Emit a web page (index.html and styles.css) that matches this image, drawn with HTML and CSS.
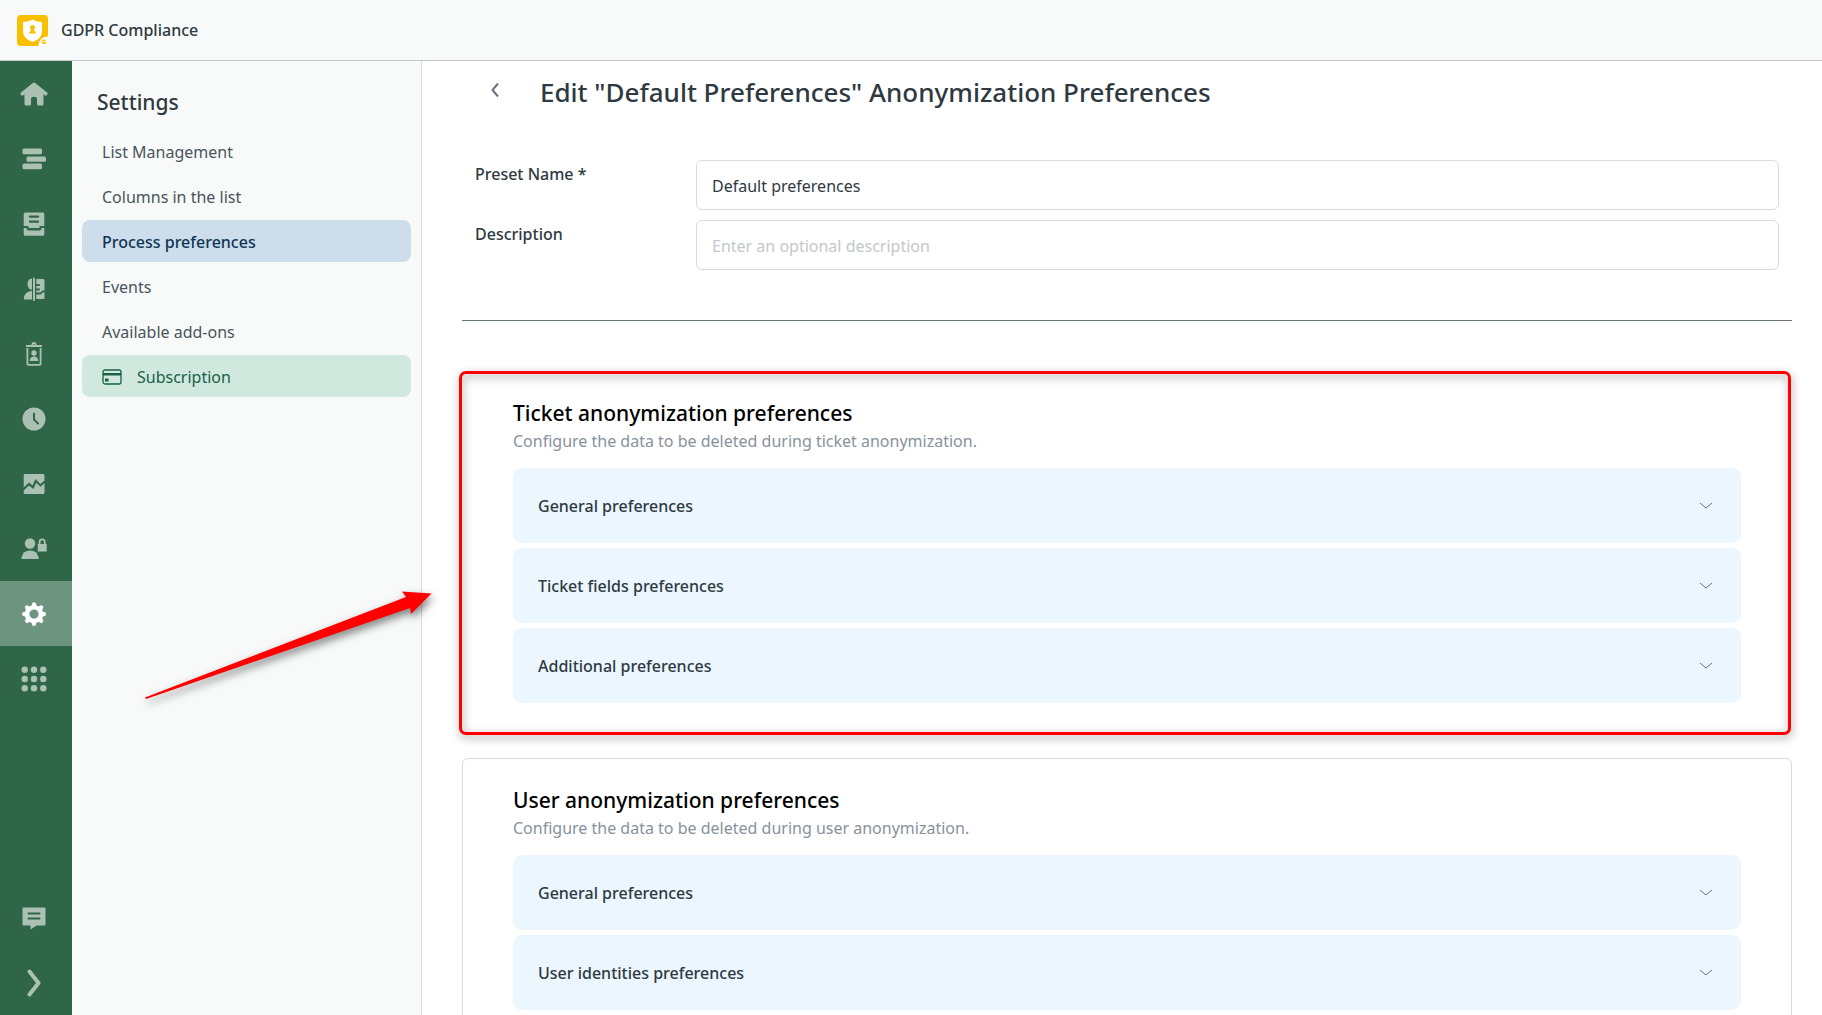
FILE: index.html
```html
<!DOCTYPE html>
<html lang="en">
<head>
<meta charset="utf-8">
<meta name="viewport" content="width=device-width, initial-scale=1">
<title>GDPR Compliance</title>
<link rel="stylesheet" href="styles.css">
</head>
<body>
<div class="app">
  <header class="topbar">
    <svg class="logo" viewBox="0 0 31 31" aria-hidden="true">
      <path fill="#f9c000" d="M4 0H27Q31 0 31 4V22A9 9 0 0 0 21.500 31H4Q0 31 0 27V4Q0 0 4 0Z"/>
      <path fill="#fff" d="M15.500 4.500Q20 7 25 7V16Q25 23.500 15.500 27Q6 23.500 6 16V7Q11 7 15.500 4.500Z"/>
      <path fill="#f9c000" d="M15.500 10A2.600 2.600 0 0 1 17 14.700L17.500 16.200Q19 16.500 19 18.500H12Q12 16.500 13.500 16.200L14 14.700A2.600 2.600 0 0 1 15.500 10Z"/>
      <path fill="#fff" d="M31 21.500A9 9 0 0 0 21.500 31H31Z"/>
      <path fill="none" stroke="#f9c000" stroke-width="1.300" d="M28.300 25.800A1.700 1.700 0 1 0 28.500 27.400H27"/>
    </svg>
    <span class="brand">GDPR Compliance</span>
  </header>

  <div class="body">
    <nav class="rail" aria-label="Main">
      <a class="rail-item" href="#" aria-label="Home"><svg viewBox="0 0 28 28"><path d="M14 2.500Q14.600 2.500 15.200 3L27.300 12.800Q28 13.500 27.400 14.300L26.600 15.300Q26 16 25.200 15.400L23.500 14.200V24Q23.500 25.500 22 25.500H18.500Q17 25.500 17 24V19Q17 16.800 14 16.800T11 19V24Q11 25.500 9.500 25.500H6Q4.500 25.500 4.500 24V14.200L2.800 15.400Q2 16 1.400 15.300L.6 14.300Q0 13.500.7 12.800L12.800 3Q13.400 2.500 14 2.500Z"/></svg></a>
      <a class="rail-item" href="#" aria-label="Views"><svg viewBox="0 0 28 28"><rect x="2.500" y="3.500" width="19.500" height="5.800" rx="1.500"/><rect x="6.500" y="11.500" width="19.500" height="5.300" rx="1.500"/><rect x="2.500" y="18.500" width="19.500" height="5.800" rx="1.500"/></svg></a>
      <a class="rail-item" href="#" aria-label="Tickets"><svg viewBox="0 0 28 28"><path fill-rule="evenodd" d="M5 2.500H23Q24.300 2.500 24.300 4V16H20.500Q19.300 16 19.300 18H8.700Q8.700 16 7.500 16H3.700V4Q3.700 2.500 5 2.500ZM10 5.500a1 1 0 0 0 0 2.300h8a1 1 0 0 0 0-2.300ZM10 10.500a1 1 0 0 0 0 2.300h8a1 1 0 0 0 0-2.300Z"/><path d="M3.700 18H6.500Q6.500 20.500 8.500 20.500H19.500Q21.500 20.500 21.500 18H24.300V24Q24.300 25.800 23 25.800H5Q3.700 25.800 3.700 24Z"/></svg></a>
      <a class="rail-item" href="#" aria-label="Users and tickets"><svg viewBox="0 0 28 28"><path d="M12 3.500V14.800Q7.500 14 7.500 9T12 3.500ZM12 15.800V24.500H3.700Q3.700 17 12 15.800Z"/><rect x="13" y="2.500" width="2" height="23.500" rx="1"/><path d="M16.300 4H23Q24.500 4 24.500 5.500V15.500H22Q21.500 17.500 20 17.500H16.300V15.500H19Q20 15.500 20 14.500T19 13.500H16.300V11H19Q20 11 20 10T19 9H16.300ZM16.300 19.500H20Q21.800 19.500 22.300 17.500H24.500V22.500Q24.500 24 23 24H16.300Z"/></svg></a>
      <a class="rail-item" href="#" aria-label="Anonymization"><svg viewBox="0 0 28 28"><path fill-rule="evenodd" d="M11.500 5V4Q11.500 2 14 2T16.500 4V5H22V7H6V5ZM13.200 5H14.800V4.200H13.200ZM6.500 8H21.500V24Q21.500 25.800 20 25.800H8Q6.500 25.800 6.500 24ZM8.300 8V24H19.700V8Z"/><circle cx="14" cy="13" r="2.700"/><path d="M9.700 21Q10 16.500 14 16.500T18.300 21Z"/></svg></a>
      <a class="rail-item" href="#" aria-label="History"><svg viewBox="0 0 28 28"><circle cx="14" cy="14" r="11.500"/><path class="cut" d="M14 8.500V14.500L18 18.500"/></svg></a>
      <a class="rail-item" href="#" aria-label="Reports"><svg viewBox="0 0 28 28"><path d="M5 4H23Q24.500 4 24.500 5.500V10.500L20.500 14L15.500 9L12.500 15.500L9 12.500L3.700 17.500V5.500Q3.700 4 5 4Z"/><path d="M24.500 13V22.500Q24.500 24 23 24H5Q3.700 24 3.700 22.500V20.500L9 15.500L13.300 19L16.300 12.700L20.500 16.800Z"/></svg></a>
      <a class="rail-item" href="#" aria-label="Roles"><svg viewBox="0 0 28 28"><circle cx="10" cy="8.500" r="5.200"/><path d="M1.500 24V22.500Q3 15.500 10 15.500T18.700 22.500V24Z"/><path fill-rule="evenodd" d="M18.700 9V7Q18.700 3.500 22.200 3.500T25.700 7V9H26.700V16.500H17.800V9ZM20.500 9H23.900V7Q23.900 5.300 22.200 5.300T20.500 7Z"/></svg></a>
      <a class="rail-item is-active" href="#" aria-label="Settings" aria-current="page"><svg viewBox="0 0 28 28"><path fill-rule="evenodd" d="M12.500 2.500H15.500L16.500 5.500L18.600 6.400L21.500 5L23.500 7L22.200 9.800L23 11.800L25.800 12.500V15.500L23 16.500L22.200 18.500L23.500 21.200L21.500 23.200L18.600 22L16.500 22.800L15.500 25.700H12.500L11.500 22.800L9.500 22L6.700 23.200L4.700 21.200L5.900 18.500L5 16.500L2.300 15.500V12.500L5 11.800L5.900 9.800L4.700 7L6.700 5L9.500 6.400L11.500 5.500ZM14 9.500A4.600 4.600 0 1 0 14 18.700A4.600 4.600 0 1 0 14 9.500Z"/></svg></a>
      <a class="rail-item" href="#" aria-label="Apps"><svg viewBox="0 0 28 28"><circle cx="4.700" cy="4.700" r="3.200"/><circle cx="14" cy="4.700" r="3.200"/><circle cx="23.300" cy="4.700" r="3.200"/><circle cx="4.700" cy="14" r="3.200"/><circle cx="14" cy="14" r="3.200"/><circle cx="23.300" cy="14" r="3.200"/><circle cx="4.700" cy="23.300" r="3.200"/><circle cx="14" cy="23.300" r="3.200"/><circle cx="23.300" cy="23.300" r="3.200"/></svg></a>
      <div class="rail-spacer"></div>
      <a class="rail-item" href="#" aria-label="Feedback"><svg viewBox="0 0 28 28"><path d="M3.500 3.500H24.500Q25.500 3.500 25.500 4.500V20.500Q25.500 21.500 24.500 21.500H16.500L10.500 25.500V21.500H3.500Q2.500 21.500 2.500 20.500V4.500Q2.500 3.500 3.500 3.500Z"/><path class="cut" d="M8.500 9.500H19.500M8.500 14.500H19.500"/></svg></a>
      <button class="rail-item" type="button" aria-label="Expand menu"><svg viewBox="0 0 28 28"><path class="line" d="M9.500 2.500L18.500 14L9.500 25.500"/></svg></button>
    </nav>

    <aside class="sidebar">
      <h2 class="sidebar-title">Settings</h2>
      <nav class="menu" aria-label="Settings">
        <a class="menu-item" href="#">List Management</a>
        <a class="menu-item" href="#">Columns in the list</a>
        <a class="menu-item is-current" href="#" aria-current="page">Process preferences</a>
        <a class="menu-item" href="#">Events</a>
        <a class="menu-item" href="#">Available add-ons</a>
        <a class="menu-item is-subscription" href="#">
          <svg class="card-icon" viewBox="0 0 20 16" aria-hidden="true"><rect x="1" y="1" width="18" height="14" rx="2" fill="none" stroke="currentColor" stroke-width="1.300"/><path fill="currentColor" d="M1 4H19V6.500H1ZM3 9.500H6.500V12.500H3Z"/></svg>
          Subscription
        </a>
      </nav>
    </aside>

    <main class="content">
      <div class="page-head">
        <button class="back" type="button" aria-label="Back"><svg viewBox="0 0 10 16"><path d="M8 1.500L2.500 8L8 14.500"/></svg></button>
        <h1 class="page-title">Edit "Default Preferences" Anonymization Preferences</h1>
      </div>

      <form class="form">
        <div class="field">
          <label for="preset-name">Preset Name *</label>
          <input id="preset-name" type="text" value="Default preferences">
        </div>
        <div class="field">
          <label for="description">Description</label>
          <input id="description" type="text" placeholder="Enter an optional description">
        </div>
      </form>

      <hr class="divider">

      <section class="card is-highlighted">
        <h2 class="card-title">Ticket anonymization preferences</h2>
        <p class="card-text">Configure the data to be deleted during ticket anonymization.</p>
        <div class="panels">
          <button class="panel" type="button">General preferences <svg class="chevron" viewBox="0 0 14 8"><path d="M1 1L7 6L13 1"/></svg></button>
          <button class="panel" type="button">Ticket fields preferences <svg class="chevron" viewBox="0 0 14 8"><path d="M1 1L7 6L13 1"/></svg></button>
          <button class="panel" type="button">Additional preferences <svg class="chevron" viewBox="0 0 14 8"><path d="M1 1L7 6L13 1"/></svg></button>
        </div>
        <div class="highlight"></div>
      </section>

      <section class="card">
        <h2 class="card-title">User anonymization preferences</h2>
        <p class="card-text">Configure the data to be deleted during user anonymization.</p>
        <div class="panels">
          <button class="panel" type="button">General preferences <svg class="chevron" viewBox="0 0 14 8"><path d="M1 1L7 6L13 1"/></svg></button>
          <button class="panel" type="button">User identities preferences <svg class="chevron" viewBox="0 0 14 8"><path d="M1 1L7 6L13 1"/></svg></button>
          <div class="panel"></div>
        </div>
      </section>
    </main>

    <svg class="arrow" viewBox="0 0 290 110" aria-hidden="true"><path d="M1 106.500L262 6L258 .5L287.500 2.500L267 23L266 17L2 108Z"/></svg>
  </div>
</div>
</body>
</html>
```
FILE: styles.css
```css
:root {
  --green: #2f6647;
  --ink: #2f3941;
  --panel: #ebf6ff;
  --line: #d8dcde;
  --red: #ff0000;
}

* { box-sizing: border-box; }

body {
  margin: 0;
  font-family: "Segoe UI", "Noto Sans", sans-serif;
  font-size: 16px;
  line-height: 24px;
  color: var(--ink);
  background: #fff;
}

h1, h2, p { margin: 0; }

a { color: inherit; text-decoration: none; }

button, input { font: inherit; color: inherit; }

button {
  border: 0;
  padding: 0;
  background: none;
  cursor: pointer;
}

.app {
  display: flex;
  flex-direction: column;
  height: 100vh;
}

/* Top bar */
.topbar {
  display: flex;
  align-items: center;
  gap: 13px;
  flex: none;
  height: 61px;
  padding: 0 17px;
  background: #f8faf9;
  border-bottom: 1px solid #c2c8cc;
}

.logo { width: 31px; height: 31px; }

.brand { font-weight: 500; }

.body {
  position: relative;
  display: flex;
  flex: 1;
  min-height: 0;
}

/* Icon rail */
.rail {
  display: flex;
  flex-direction: column;
  flex: none;
  width: 72px;
  background: var(--green);
}

.rail-item {
  display: flex;
  align-items: center;
  justify-content: center;
  flex: none;
  height: 65px;
  padding-right: 4px;
}

.rail-item svg {
  width: 28px;
  height: 28px;
  fill: #aac1b4;
}

.rail-item .cut {
  fill: none;
  stroke: var(--green);
  stroke-width: 2;
  stroke-linecap: round;
}

.rail-item .line {
  fill: none;
  stroke: #aac1b4;
  stroke-width: 4;
  stroke-linecap: round;
  stroke-linejoin: round;
}

.rail-item.is-active { background: #6d947f; }

.rail-item.is-active svg { fill: #fff; }

.rail-spacer { flex: 1; }

/* Settings menu */
.sidebar {
  flex: none;
  width: 350px;
  padding: 25px 10px;
  background: #f8faf9;
  border-right: 1px solid var(--line);
}

.sidebar-title {
  padding: 0 15px;
  font-size: 21px;
  line-height: 32px;
  font-weight: 500;
}

.menu {
  display: flex;
  flex-direction: column;
  gap: 3px;
  margin-top: 12px;
}

.menu-item {
  display: flex;
  align-items: center;
  gap: 15px;
  height: 42px;
  padding: 1px 20px 0;
  border-radius: 8px;
  color: #49545c;
}

.menu-item.is-current {
  background: #cdddeb;
  color: #0f3554;
  font-weight: 500;
}

.menu-item.is-subscription {
  background: #d1e8df;
  color: #186146;
}

.card-icon { width: 20px; height: 16px; }

/* Page */
.content {
  flex: 1;
  min-width: 0;
  padding: 11px 30px 0 40px;
  overflow-y: auto;
  scrollbar-width: none;
}

.page-head {
  display: flex;
  align-items: center;
  gap: 40px;
  padding-left: 28px;
}

.back {
  display: flex;
  width: 10px;
  margin-bottom: 4px;
}

.back svg {
  width: 10px;
  height: 16px;
  fill: none;
  stroke: #68737d;
  stroke-width: 2;
}

.page-title {
  font-size: 26px;
  line-height: 40px;
  font-weight: 500;
}

.form {
  display: flex;
  flex-direction: column;
  gap: 10px;
  padding: 48px 13px 50px;
}

.field {
  display: grid;
  grid-template-columns: 221px 1fr;
  align-items: start;
}

.field label {
  padding-top: 2px;
  font-weight: 500;
}

.field input {
  width: 100%;
  height: 50px;
  padding: 1px 15px 0;
  border: 1px solid var(--line);
  border-radius: 6px;
  background: #fff;
}

.field input::placeholder { color: #c2c8cc; opacity: 1; }

.divider {
  margin: 0 0 50px;
  border: 0;
  border-top: 1px solid #68737d;
}

.card {
  position: relative;
  margin-bottom: 20px;
  padding: 25px 50px 34px;
  border: 1px solid var(--line);
  border-radius: 6px;
}

.card-title {
  font-size: 21px;
  line-height: 32px;
  font-weight: 500;
  color: #000;
}

.card-text { color: #87929d; }

.panels {
  display: flex;
  flex-direction: column;
  gap: 5px;
  margin-top: 15px;
}

.panel {
  display: flex;
  align-items: center;
  justify-content: space-between;
  height: 75px;
  padding: 0 28px 0 25px;
  border-radius: 9px;
  background: var(--panel);
  font-weight: 500;
}

.chevron {
  width: 14px;
  height: 8px;
  fill: none;
  stroke: #68737d;
  stroke-width: 1;
}

/* Red callouts laid over the page */
.card.is-highlighted { border-color: transparent; }

.highlight {
  position: absolute;
  inset: -1px 0 2px -4px;
  border: 3px solid var(--red);
  border-radius: 7px;
  filter: drop-shadow(1px 3px 4px rgba(0, 0, 0, 0.45));
  pointer-events: none;
}

.arrow {
  position: absolute;
  left: 144px;
  top: 530px;
  width: 290px;
  height: 110px;
  overflow: visible;
  fill: var(--red);
  filter: drop-shadow(2px 4px 4px rgba(0, 0, 0, 0.5));
  pointer-events: none;
}
```
